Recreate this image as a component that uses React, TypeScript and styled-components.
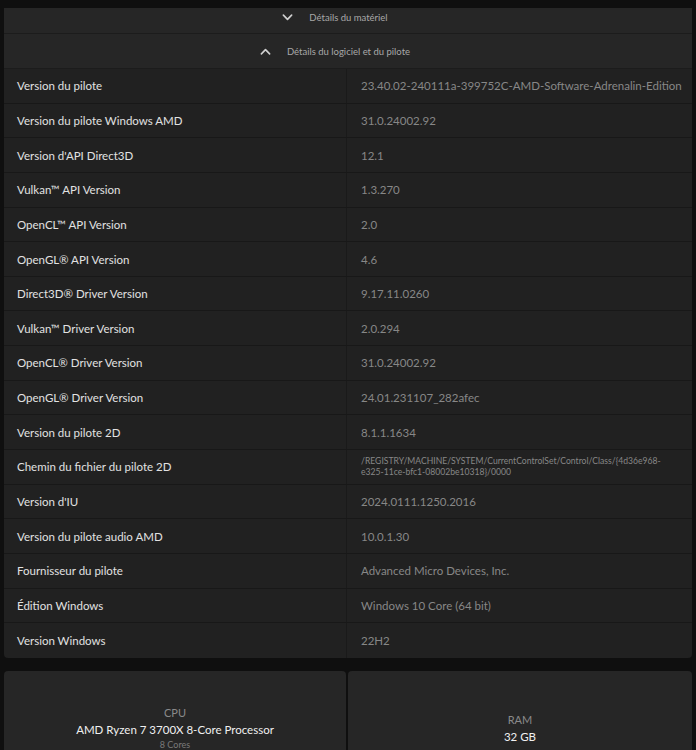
import * as React from 'react';
import styled, { createGlobalStyle } from 'styled-components';

const GlobalStyle = createGlobalStyle`
  html, body {
    margin: 0;
    padding: 0;
    background: #0f0f0f;
    font-family: 'Segoe UI', 'Lato', 'Noto Sans', sans-serif;
    overflow: hidden;
  }
`;

const Page = styled.div`
  width: 696px;
  height: 750px;
  padding: 8px 4px 0 4px;
  box-sizing: border-box;
  overflow: hidden;
  display: flex;
  flex-direction: column;
`;

const Panel = styled.div`
  flex-shrink: 0;
  background: #212121;
  border-radius: 0 0 4px 4px;
  overflow: hidden;
`;

const SectionHeader = styled.div<{ $height: number; $lift?: number }>`
  height: ${({ $height }) => $height}px;
  display: flex;
  align-items: center;
  justify-content: center;
  gap: 16px;
  padding-right: 26px;
  padding-bottom: ${({ $lift = 0 }) => $lift}px;
  background: #262626;
  border-bottom: 1px solid #1c1c1c;
  box-sizing: border-box;
  color: #a8a8a8;
  font-size: 9.5px;

  & > svg {
    width: 11px;
    height: 11px;
    stroke: #cfcfcf;
  }
`;

const Row = styled.div`
  height: 34.65px;
  display: grid;
  grid-template-columns: 343px 1fr;
  border-bottom: 1px solid #181818;
  box-sizing: border-box;

  &:last-child {
    border-bottom: none;
  }
`;

const Label = styled.div`
  display: flex;
  align-items: center;
  padding-left: 13px;
  border-right: 1px solid #1a1a1a;
  color: #e2e2e2;
  font-size: 11.5px;
`;

const Value = styled.div<{ $small?: boolean }>`
  display: flex;
  align-items: center;
  padding-left: 14px;
  padding-right: 10px;
  color: #878787;
  font-size: ${({ $small }) => ($small ? '8.6px' : '11.5px')};
  line-height: ${({ $small }) => ($small ? '11px' : 'normal')};
`;

const Cards = styled.div`
  flex-shrink: 0;
  margin-top: 13px;
  display: grid;
  grid-template-columns: 342px 1fr;
  gap: 2px;
`;

const Card = styled.div<{ $offset: number }>`
  height: 100px;
  background: #262626;
  border-radius: 4px 4px 0 0;
  display: flex;
  flex-direction: column;
  align-items: center;
  padding-top: ${({ $offset }) => $offset}px;
  box-sizing: border-box;
`;

const CardTitle = styled.div`
  color: #8a8a8a;
  font-size: 11px;
  line-height: 16px;
`;

const CardValue = styled.div`
  color: #f0f0f0;
  font-size: 11.5px;
  line-height: 18px;
`;

const CardSub = styled.div`
  color: #7a7a7a;
  font-size: 9px;
  line-height: 12px;
`;

function Chevron({ up }: { up?: boolean }) {
  return (
    <svg viewBox="0 0 12 12" fill="none" strokeWidth={1.8} strokeLinecap="round" strokeLinejoin="round">
      <path d={up ? 'M1.5 8.5 6 4l4.5 4.5' : 'M1.5 3.5 6 8l4.5-4.5'} />
    </svg>
  );
}

const rows: [string, string][] = [
  ['Version du pilote', '23.40.02-240111a-399752C-AMD-Software-Adrenalin-Edition'],
  ['Version du pilote Windows AMD', '31.0.24002.92'],
  ["Version d'API Direct3D", '12.1'],
  ['Vulkan™ API Version', '1.3.270'],
  ['OpenCL™ API Version', '2.0'],
  ['OpenGL® API Version', '4.6'],
  ['Direct3D® Driver Version', '9.17.11.0260'],
  ['Vulkan™ Driver Version', '2.0.294'],
  ['OpenCL® Driver Version', '31.0.24002.92'],
  ['OpenGL® Driver Version', '24.01.231107_282afec'],
  ['Version du pilote 2D', '8.1.1.1634'],
  [
    'Chemin du fichier du pilote 2D',
    '/REGISTRY/MACHINE/SYSTEM/CurrentControlSet/Control/Class/{4d36e968-e325-11ce-bfc1-08002be10318}/0000',
  ],
  ["Version d'IU", '2024.0111.1250.2016'],
  ['Version du pilote audio AMD', '10.0.1.30'],
  ['Fournisseur du pilote', 'Advanced Micro Devices, Inc.'],
  ['Édition Windows', 'Windows 10 Core (64 bit)'],
  ['Version Windows', '22H2'],
];

export default function App() {
  return (
    <>
      <GlobalStyle />
      <Page>
        <Panel>
          <SectionHeader $height={26} $lift={6}>
            <Chevron />
            <span>Détails du matériel</span>
          </SectionHeader>
          <SectionHeader $height={35}>
            <Chevron up />
            <span>Détails du logiciel et du pilote</span>
          </SectionHeader>
          {rows.map(([label, value]) => (
            <Row key={label}>
              <Label>{label}</Label>
              <Value $small={value.length > 60}>{value}</Value>
            </Row>
          ))}
        </Panel>
        <Cards>
          <Card $offset={34}>
            <CardTitle>CPU</CardTitle>
            <CardValue>AMD Ryzen 7 3700X 8-Core Processor</CardValue>
            <CardSub>8 Cores</CardSub>
          </Card>
          <Card $offset={41}>
            <CardTitle>RAM</CardTitle>
            <CardValue>32 GB</CardValue>
          </Card>
        </Cards>
      </Page>
    </>
  );
}
